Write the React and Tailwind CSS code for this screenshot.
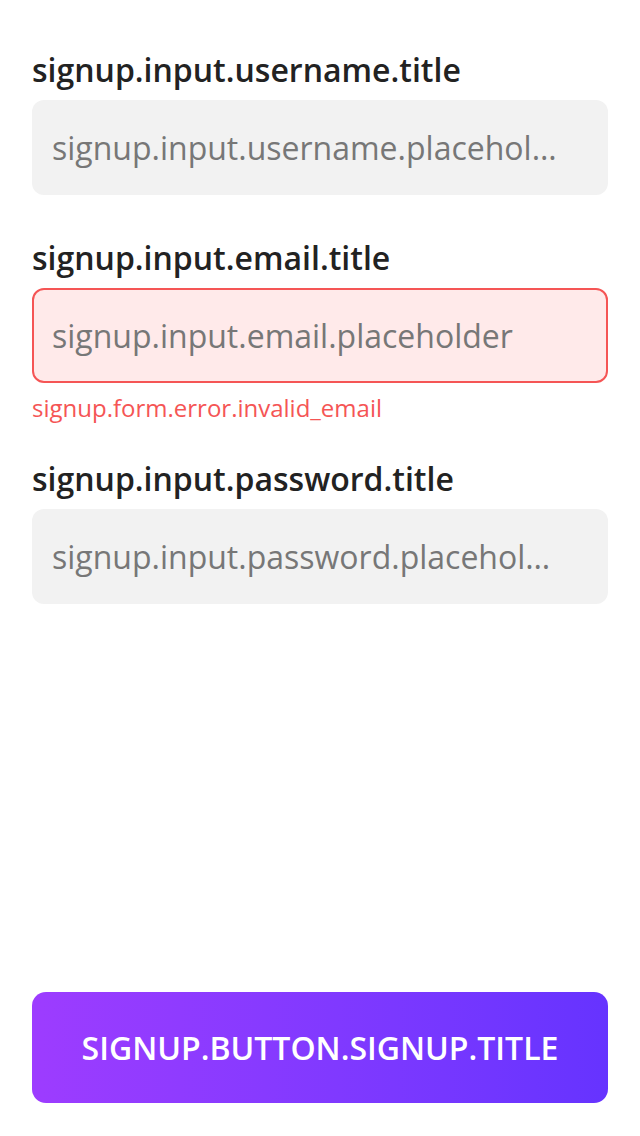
import React, { useState } from 'react';

const Field = ({ label, placeholder, error, className = '' }) => {
  const [value, setValue] = useState('');

  return (
    <div className={className}>
      <label className="block text-[32px] leading-[40px] font-semibold text-[#222222] mb-[10px]">
        {label}
      </label>
      <input
        value={value}
        onChange={(e) => setValue(e.target.value)}
        placeholder={placeholder}
        className={
          error
            ? 'block w-full h-[95px] rounded-xl pl-[18px] pr-[48px] text-[32px] text-[#222222] placeholder:text-[#777777] outline-none bg-[#ffeaea] border-2 border-[#f55555] truncate'
            : 'block w-full h-[95px] rounded-xl pl-[18px] pr-[48px] text-[32px] text-[#222222] placeholder:text-[#777777] outline-none bg-[#f2f2f2] border-2 border-transparent truncate'
        }
      />
      {error && (
        <p className="mt-[10px] text-[24px] leading-[30px] text-[#f55555]">{error}</p>
      )}
    </div>
  );
};

const App = () => {
  return (
    <div className="h-[1136px] bg-white flex flex-col px-8 pt-[50px] pb-[33px] font-['Open_Sans',sans-serif]">
      <Field
        label="signup.input.username.title"
        placeholder="signup.input.username.placeholder"
        className="mb-[43px]"
      />
      <Field
        label="signup.input.email.title"
        placeholder="signup.input.email.placeholder"
        error="signup.form.error.invalid_email"
        className="mb-[36px]"
      />
      <Field
        label="signup.input.password.title"
        placeholder="signup.input.password.placeholder"
      />

      <button className="mt-auto h-[111px] w-full rounded-[14px] bg-gradient-to-r from-[#9d3cff] to-[#6633ff] text-white text-[32px] font-semibold uppercase">
        signup.button.signup.title
      </button>
    </div>
  );
};

export default App;
